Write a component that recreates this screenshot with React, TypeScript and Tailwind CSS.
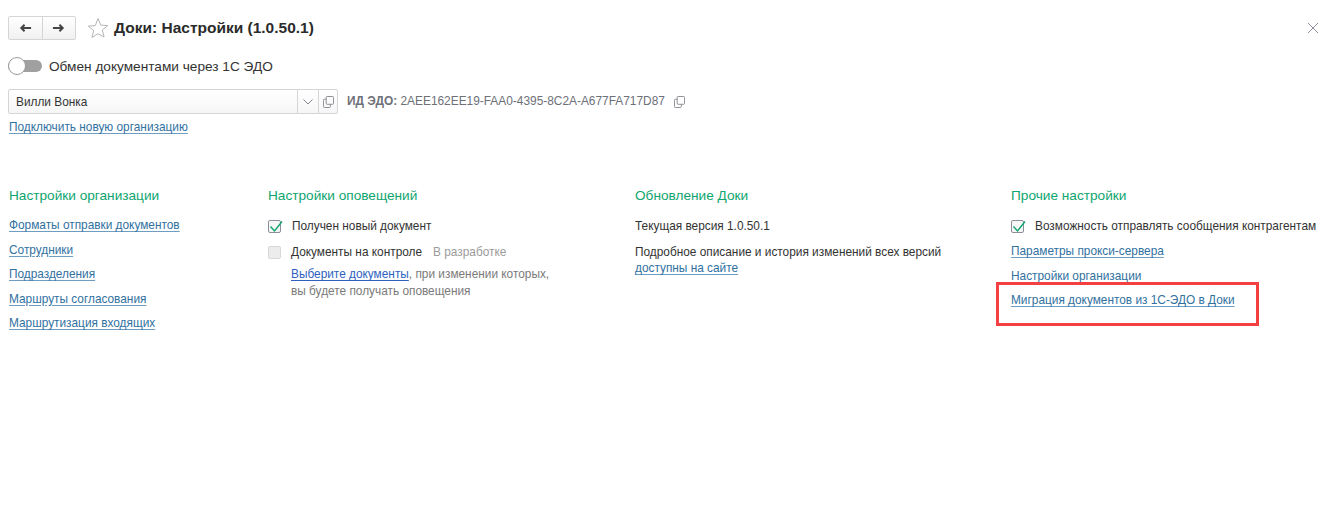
import React from 'react';

const FONT = "font-['Liberation_Sans',Arial,sans-serif]";

const Link: React.FC<{ children: React.ReactNode; className?: string }> = ({ children, className }) => (
  <a className={`text-[#31719f] underline decoration-[#6f9dc2] underline-offset-2 text-[11.85px] leading-[15px] ${className ?? ''}`}>{children}</a>
);

const Heading: React.FC<{ children: React.ReactNode }> = ({ children }) => (
  <h2 className="text-[13.65px] leading-[17px] text-[#0fa56f] mb-[14px]">{children}</h2>
);

const Check: React.FC<{ checked?: boolean }> = ({ checked }) => (
  <span className={`relative block w-[13px] h-[13px] rounded-[2px] border shrink-0 ${checked ? 'border-[#8b8f98] bg-[#f7f7f7]' : 'border-[#d8d8d8] bg-[#ececec]'}`}>
    {checked && (
      <svg viewBox="0 0 16 16" className="absolute left-[-1px] top-[-3px] w-[16px] h-[16px]" fill="none" stroke="#0fa56f" strokeWidth="1.4">
        <path d="M2.5 8.5 L6.5 13 L14 3.5" />
      </svg>
    )}
  </span>
);

const CopyIcon: React.FC<{ className?: string }> = ({ className }) => (
  <svg viewBox="0 0 12 13" className={className} fill="none" stroke="#85878e" strokeWidth="1">
    <rect x="3.5" y="0.5" width="8" height="8.5" rx="1" />
    <path d="M3.5 3.5 H1.5 a1 1 0 0 0 -1 1 V11.5 a1 1 0 0 0 1 1 H7 a1 1 0 0 0 1 -1 V9" />
  </svg>
);

const App: React.FC = () => {
  return (
    <div className={`relative w-[1344px] h-[509px] bg-white overflow-hidden text-[#333] ${FONT}`}>
      <div className="flex items-center pl-2 pr-[25px] pt-4 h-10">
        <div className="flex w-[68px] h-6 rounded-[2px] border border-[#d5d5d5] bg-gradient-to-b from-white to-[#f1f1f1]">
          <button className="flex-1 flex items-center justify-center border-r border-[#d5d5d5]">
            <svg viewBox="0 0 14 10" className="w-[13px] h-[10px]" fill="none" stroke="#444" strokeWidth="2.2"><path d="M13 5H2M6 1.500 2.500 5 6 8.500" /></svg>
          </button>
          <button className="flex-1 flex items-center justify-center">
            <svg viewBox="0 0 14 10" className="w-[13px] h-[10px]" fill="none" stroke="#444" strokeWidth="2.2"><path d="M1 5h11M8 1.500 11.500 5 8 8.500" /></svg>
          </button>
        </div>
        <svg viewBox="0 0 22 22" className="ml-[11px] w-[22px] h-[22px]" fill="none" stroke="#b5b5b5" strokeWidth="1"><path d="M11 1.500l2.700 6.600 7 .5-5.400 4.500 1.800 6.900L11 16.700l-6.100 3.800 1.800-6.900L1.300 9.100l7-.5z" /></svg>
        <h1 className="ml-[5px] text-[15.5px] font-bold leading-[18px] text-[#2b2b2b]">Доки: Настройки (1.0.50.1)</h1>
        <svg viewBox="0 0 12 12" className="ml-auto w-3 h-3" fill="none" stroke="#8f8f9c" strokeWidth="1"><path d="M1 1l10 10M11 1 1 11" /></svg>
      </div>

      <div className="flex items-center pl-2 mt-[16px] h-5">
        <span className="relative block w-[34px] h-[12px] rounded-full bg-[#a0a0a0]">
          <span className="absolute left-0 top-[-3px] w-[18px] h-[18px] rounded-full bg-white border border-[#9a9a9a]" />
        </span>
        <span className="ml-[7px] text-[13.65px] leading-[17px]">Обмен документами через 1С ЭДО</span>
      </div>

      <div className="flex items-center pl-2 mt-[13px]">
        <div className="flex w-[330px] h-[25px] rounded-[2px] border border-[#d5d5d5] bg-gradient-to-b from-white to-[#f6f6f6]">
          <span className="flex-1 pl-[7px] text-[11.85px] leading-[24px]">Вилли Вонка</span>
          <span className="w-[21px] flex items-center justify-center border-l border-[#d5d5d5]">
            <svg viewBox="0 0 10 6" className="w-[10px] h-[6px]" fill="none" stroke="#85878e" strokeWidth="1"><path d="M.5.5 5 5 9.500.5" /></svg>
          </span>
          <span className="w-[19px] flex items-center justify-center border-l border-[#d5d5d5]">
            <CopyIcon className="w-[11px] h-[12px]" />
          </span>
        </div>
        <span className="ml-[9px] text-[11.9px] text-[#6e7078]"><b>ИД ЭДО:</b> 2AEE162EE19-FAA0-4395-8C2A-A677FA717D87</span>
        <CopyIcon className="ml-[9px] w-[11px] h-[12px]" />
      </div>

      <div className="pl-[9px] mt-[6px] h-[15px] flex">
        <Link>Подключить новую организацию</Link>
      </div>

      <div className="flex pl-[9px] mt-[52px]">
        <section className="w-[259px]">
          <Heading>Настройки организации</Heading>
          <div className="flex flex-col items-start gap-[9.500px]">
            <Link>Форматы отправки документов</Link>
            <Link>Сотрудники</Link>
            <Link>Подразделения</Link>
            <Link>Маршруты согласования</Link>
            <Link>Маршрутизация входящих</Link>
          </div>
        </section>

        <section className="w-[367px]">
          <Heading>Настройки оповещений</Heading>
          <div className="flex items-center mt-[15px]">
            <Check checked />
            <span className="ml-[11px] text-[11.85px] leading-[15px]">Получен новый документ</span>
          </div>
          <div className="flex items-center mt-[11px]">
            <Check />
            <span className="ml-[10px] text-[11.85px] leading-[15px]">Документы на контроле</span>
            <span className="ml-[11px] text-[11.85px] leading-[15px] text-[#9b9b9b]">В разработке</span>
          </div>
          <p className="ml-[23px] mt-[6px] text-[11.85px] leading-[17px] text-[#7a7a7a]">
            <a className="text-[#2f5fc0] underline underline-offset-2">Выберите документы</a>, при изменении которых,<br />
            вы будете получать оповещения
          </p>
        </section>

        <section className="w-[376px]">
          <Heading>Обновление Доки</Heading>
          <p className="text-[11.85px] leading-[15px] mt-[15px]">Текущая версия 1.0.50.1</p>
          <p className="text-[11.85px] leading-[15px] mt-[11px]">Подробное описание и история изменений всех версий</p>
          <Link className="block w-fit mt-[1px]">доступны на сайте</Link>
        </section>

        <section>
          <Heading>Прочие настройки</Heading>
          <div className="flex items-center mt-[15px]">
            <Check checked />
            <span className="ml-[11px] text-[11.85px] leading-[15px]">Возможность отправлять сообщения контрагентам</span>
          </div>
          <div className="flex flex-col items-start gap-[9.500px] mt-[10px]">
            <Link>Параметры прокси-сервера</Link>
            <Link className="no-underline">Настройки организации</Link>
            <Link>Миграция документов из 1С-ЭДО в Доки</Link>
          </div>
        </section>
      </div>

      <div className="absolute left-[996px] top-[282px] w-[263px] h-[44px] border-[3px] border-[#f44040]" />
    </div>
  );
};

export default App;
